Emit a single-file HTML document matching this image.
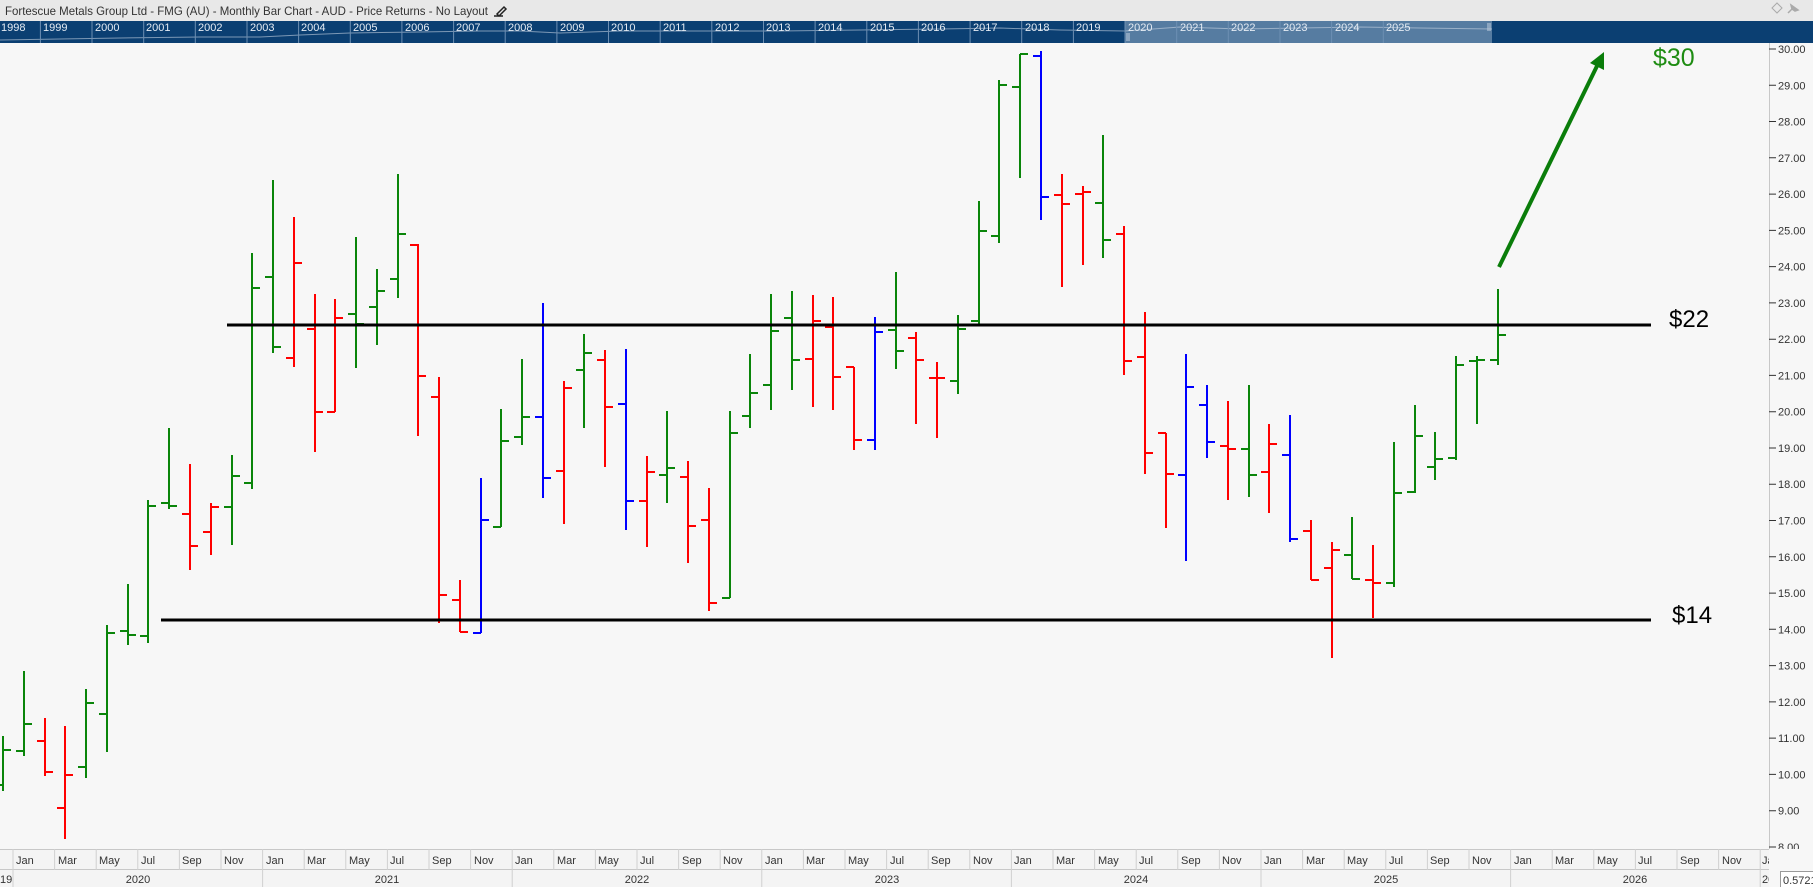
<!DOCTYPE html>
<html><head><meta charset="utf-8"><style>
html,body{margin:0;padding:0;width:1813px;height:887px;overflow:hidden;background:#f7f7f7;font-family:"Liberation Sans",sans-serif}
svg{position:absolute;left:0;top:0}
</style></head><body>
<svg width="1813" height="887" viewBox="0 0 1813 887" xmlns="http://www.w3.org/2000/svg" font-family="Liberation Sans, sans-serif">
<rect x="0" y="0" width="1813" height="21" fill="#e8e8e8"/>
<text x="5" y="15" font-size="12" fill="#333" textLength="483" lengthAdjust="spacingAndGlyphs">Fortescue Metals Group Ltd - FMG (AU) - Monthly Bar Chart - AUD - Price Returns - No Layout</text>
<path d="M497 14 L504 7 L506 9 L499 16 Z M494 16 H503" stroke="#222" stroke-width="1.5" fill="none"/>
<path d="M1772 8 L1777 3 L1782 8 L1777 13 Z" stroke="#aaa" fill="none"/>
<path d="M1788 13 L1793 8 M1791 5 L1798 10 L1795 11 L1792 9 Z" stroke="#aaa" stroke-width="1.5" fill="#aaa"/>
<rect x="0" y="21" width="1813" height="22" fill="#0b3f72"/>
<rect x="1125" y="21" width="367" height="22" fill="#567ca1"/>
<polyline points="0,40 60,39 120,38 200,37 260,37 300,35 350,33 420,32 480,31 520,31 560,33 620,31 700,31 780,31 860,30 940,29 1000,28 1060,30 1125,31 1180,27 1240,29 1300,28 1360,27 1420,28 1492,29" fill="none" stroke="#c8d4e2" stroke-width="1" opacity="0.6"/>
<g stroke="#6d8fb3" stroke-width="1">
<path d="M40.4 21V43M92 21V43M143.7 21V43M195.3 21V43M247 21V43M298.6 21V43M350.3 21V43M401.9 21V43M453.6 21V43M505.2 21V43M556.9 21V43M608.5 21V43M660.2 21V43M711.8 21V43M763.5 21V43M815.1 21V43M866.8 21V43M918.4 21V43M970.1 21V43M1021.7 21V43M1073.4 21V43M1125 21V43M1176.7 21V43M1228.3 21V43M1280 21V43M1331.6 21V43M1383.3 21V43"/>
</g>
<g font-size="11" fill="#e4ebf3">
<text x="1" y="31">1998</text><text x="43" y="31">1999</text><text x="95" y="31">2000</text><text x="146" y="31">2001</text><text x="198" y="31">2002</text><text x="250" y="31">2003</text><text x="301" y="31">2004</text><text x="353" y="31">2005</text><text x="405" y="31">2006</text><text x="456" y="31">2007</text><text x="508" y="31">2008</text><text x="560" y="31">2009</text><text x="611" y="31">2010</text><text x="663" y="31">2011</text><text x="715" y="31">2012</text><text x="766" y="31">2013</text><text x="818" y="31">2014</text><text x="870" y="31">2015</text><text x="921" y="31">2016</text><text x="973" y="31">2017</text><text x="1025" y="31">2018</text><text x="1076" y="31">2019</text><text x="1128" y="31">2020</text><text x="1180" y="31">2021</text><text x="1231" y="31">2022</text><text x="1283" y="31">2023</text><text x="1335" y="31">2024</text><text x="1386" y="31">2025</text>
</g>
<path d="M1127 33V41M1129 33V41M1488 23V31M1490 23V31" stroke="#c0cede" stroke-width="1"/>
<line x1="1769.5" y1="43" x2="1769.5" y2="849" stroke="#c8c8c8"/>
<g stroke="#333" stroke-width="1">
<path d="M1769 49H1776M1769 85.3H1776M1769 121.5H1776M1769 157.8H1776M1769 194.1H1776M1769 230.4H1776M1769 266.6H1776M1769 302.9H1776M1769 339.2H1776M1769 375.4H1776M1769 411.7H1776M1769 448H1776M1769 484.2H1776M1769 520.5H1776M1769 556.8H1776M1769 593.1H1776M1769 629.3H1776M1769 665.6H1776M1769 701.9H1776M1769 738.1H1776M1769 774.4H1776M1769 810.7H1776M1769 847H1776"/>
</g>
<g font-size="11" fill="#333">
<text x="1778" y="53">30.00</text><text x="1778" y="89.3">29.00</text><text x="1778" y="125.5">28.00</text><text x="1778" y="161.8">27.00</text><text x="1778" y="198.1">26.00</text><text x="1778" y="234.4">25.00</text><text x="1778" y="270.6">24.00</text><text x="1778" y="306.9">23.00</text><text x="1778" y="343.2">22.00</text><text x="1778" y="379.4">21.00</text><text x="1778" y="415.7">20.00</text><text x="1778" y="452">19.00</text><text x="1778" y="488.2">18.00</text><text x="1778" y="524.5">17.00</text><text x="1778" y="560.8">16.00</text><text x="1778" y="597.1">15.00</text><text x="1778" y="633.3">14.00</text><text x="1778" y="669.6">13.00</text><text x="1778" y="705.9">12.00</text><text x="1778" y="742.1">11.00</text><text x="1778" y="778.4">10.00</text><text x="1778" y="814.7">9.00</text><text x="1778" y="851">8.00</text>
</g>
<defs><clipPath id="c"><rect x="0" y="43" width="1769" height="806"/></clipPath></defs>
<g clip-path="url(#c)" fill="none" stroke-width="2">
<path stroke="#0a850a" d="M3 736V791M-5 785H3M3 750H11M24 671V756M16 751H24M24 724H32M86 689V778M78 767H86M86 703H94M107 625V752M99 714H107M107 633H115M128 584V645M120 631H128M128 635H136M148 500V643M140 636H148M148 506H156M169 428V509M161 503H169M169 506H177M232 455V545M224 507H232M232 476H240M252 253V489M244 483H252M252 288H260M273 180V353M265 277H273M273 347H281M356 237V368M348 314H356M356 324H364M377 269V345M369 307H377M377 291H385M398 174V298M390 279H398M398 234H406M501 409V527M493 527H501M501 441H509M522 359V445M514 437H522M522 417H530M584 334V428M576 370H584M584 353H592M667 411V503M659 475H667M667 468H675M730 411V598M722 598H730M730 433H738M750 354V428M742 416H750M750 393H758M771 294V410M763 385H771M771 331H779M792 291V390M784 318H792M792 360H800M896 272V369M888 330H896M896 351H904M958 315V394M950 381H958M958 329H966M979 201V325M971 321H979M979 231H987M999 80V243M991 236H999M999 85H1007M1020 54V178M1012 87H1020M1020 54H1028M1103 135V258M1095 203H1103M1103 240H1111M1249 385V497M1241 449H1249M1249 475H1257M1352 517V579M1344 555H1352M1352 579H1360M1394 442V587M1386 583H1394M1394 493H1402M1415 405V493M1407 492H1415M1415 436H1423M1435 432V480M1427 467H1435M1435 459H1443M1456 356V460M1448 458H1456M1456 365H1464M1477 356V424M1469 361H1477M1477 360H1485M1498 289V365M1490 360H1498M1498 335H1506"/>
<path stroke="#ff0000" d="M45 718V776M37 741H45M45 772H53M65 726V839M57 808H65M65 775H73M190 464V570M182 514H190M190 546H198M211 503V555M203 532H211M211 507H219M294 217V367M286 358H294M294 263H302M315 294V452M307 329H315M315 412H323M335 299V412M327 412H335M335 318H343M418 244V436M410 245H418M418 376H426M439 377V623M431 397H439M439 595H447M460 580V632M452 600H460M460 632H468M564 381V524M556 471H564M564 388H572M605 350V467M597 360H605M605 407H613M647 456V547M639 501H647M647 472H655M688 461V563M680 477H688M688 526H696M709 488V611M701 520H709M709 603H717M813 295V407M805 359H813M813 321H821M833 297V410M825 327H833M833 377H841M854 367V450M846 367H854M854 440H862M916 332V424M908 338H916M916 360H924M937 362V438M929 378H937M937 378H945M1062 174V287M1054 195H1062M1062 204H1070M1083 186V265M1075 194H1083M1083 192H1091M1124 226V375M1116 234H1124M1124 361H1132M1145 312V474M1137 357H1145M1145 453H1153M1166 433V528M1158 433H1166M1166 474H1174M1228 401V500M1220 446H1228M1228 449H1236M1269 424V513M1261 472H1269M1269 444H1277M1311 520V580M1303 531H1311M1311 580H1319M1332 542V658M1324 568H1332M1332 550H1340M1373 545V618M1365 580H1373M1373 583H1381"/>
<path stroke="#0000ff" d="M481 478V633M473 633H481M481 520H489M543 303V498M535 417H543M543 478H551M626 349V530M618 404H626M626 501H634M875 317V450M867 440H875M875 332H883M1041 51V220M1033 56H1041M1041 197H1049M1186 354V561M1178 475H1186M1186 387H1194M1207 385V458M1199 405H1207M1207 442H1215M1290 415V542M1282 455H1290M1290 539H1298"/>
<line x1="227" y1="325" x2="1651" y2="325" stroke="#000" stroke-width="3"/>
<line x1="161" y1="620" x2="1651" y2="620" stroke="#000" stroke-width="3"/>
<line x1="1499" y1="267" x2="1597" y2="66" stroke="#0a7d0a" stroke-width="4"/>
<polygon points="1604,52 1604,70 1590,63" fill="#0a7d0a" stroke="none"/>
</g>
<text x="1653" y="66" font-size="25" fill="#1e8c12">$30</text>
<text x="1669" y="327" font-size="24" fill="#000">$22</text>
<text x="1672" y="623" font-size="24" fill="#000">$14</text>
<rect x="0" y="849" width="1769" height="38" fill="#f4f4f4"/>
<line x1="0" y1="849.5" x2="1769" y2="849.5" stroke="#c8c8c8"/>
<line x1="0" y1="869.5" x2="1769" y2="869.5" stroke="#c8c8c8"/>
<g stroke="#d0d0d0" stroke-width="1">
<path d="M13 849V870M54.6 849V870M96.2 849V870M137.8 849V870M179.4 849V870M221 849V870M262.6 849V870M304.2 849V870M345.8 849V870M387.4 849V870M429 849V870M470.6 849V870M512.2 849V870M553.8 849V870M595.4 849V870M637 849V870M678.6 849V870M720.2 849V870M761.8 849V870M803.4 849V870M845 849V870M886.6 849V870M928.2 849V870M969.8 849V870M1011.4 849V870M1053 849V870M1094.6 849V870M1136.2 849V870M1177.8 849V870M1219.4 849V870M1261 849V870M1302.6 849V870M1344.2 849V870M1385.8 849V870M1427.4 849V870M1469 849V870M1510.6 849V870M1552.2 849V870M1593.8 849V870M1635.4 849V870M1677 849V870M1718.6 849V870M1760.2 849V870"/>
<path d="M13 870V887M262.6 870V887M512.2 870V887M761.8 870V887M1011.4 870V887M1261 870V887M1510.6 870V887M1760.2 870V887"/>
</g>
<g font-size="11" fill="#333">
<text x="16" y="864">Jan</text><text x="58" y="864">Mar</text><text x="99" y="864">May</text><text x="141" y="864">Jul</text><text x="182" y="864">Sep</text><text x="224" y="864">Nov</text>
<text x="266" y="864">Jan</text><text x="307" y="864">Mar</text><text x="349" y="864">May</text><text x="390" y="864">Jul</text><text x="432" y="864">Sep</text><text x="474" y="864">Nov</text>
<text x="515" y="864">Jan</text><text x="557" y="864">Mar</text><text x="598" y="864">May</text><text x="640" y="864">Jul</text><text x="682" y="864">Sep</text><text x="723" y="864">Nov</text>
<text x="765" y="864">Jan</text><text x="806" y="864">Mar</text><text x="848" y="864">May</text><text x="890" y="864">Jul</text><text x="931" y="864">Sep</text><text x="973" y="864">Nov</text>
<text x="1014" y="864">Jan</text><text x="1056" y="864">Mar</text><text x="1098" y="864">May</text><text x="1139" y="864">Jul</text><text x="1181" y="864">Sep</text><text x="1222" y="864">Nov</text>
<text x="1264" y="864">Jan</text><text x="1306" y="864">Mar</text><text x="1347" y="864">May</text><text x="1389" y="864">Jul</text><text x="1430" y="864">Sep</text><text x="1472" y="864">Nov</text>
<text x="1514" y="864">Jan</text><text x="1555" y="864">Mar</text><text x="1597" y="864">May</text><text x="1638" y="864">Jul</text><text x="1680" y="864">Sep</text><text x="1722" y="864">Nov</text>
<text x="1762" y="864">Ja</text>
<text x="0" y="883">19</text>
<text x="138" y="883" text-anchor="middle">2020</text><text x="387" y="883" text-anchor="middle">2021</text><text x="637" y="883" text-anchor="middle">2022</text><text x="887" y="883" text-anchor="middle">2023</text><text x="1136" y="883" text-anchor="middle">2024</text><text x="1386" y="883" text-anchor="middle">2025</text><text x="1635" y="883" text-anchor="middle">2026</text>
<text x="1762" y="883">20</text>
</g>
<rect x="1769" y="849" width="44" height="38" fill="#f7f7f7"/>
<rect x="1780.5" y="871.5" width="34" height="16" fill="#fff" stroke="#999"/>
<text x="1783" y="884" font-size="11" fill="#333">0.5721</text>
</svg>
</body></html>
